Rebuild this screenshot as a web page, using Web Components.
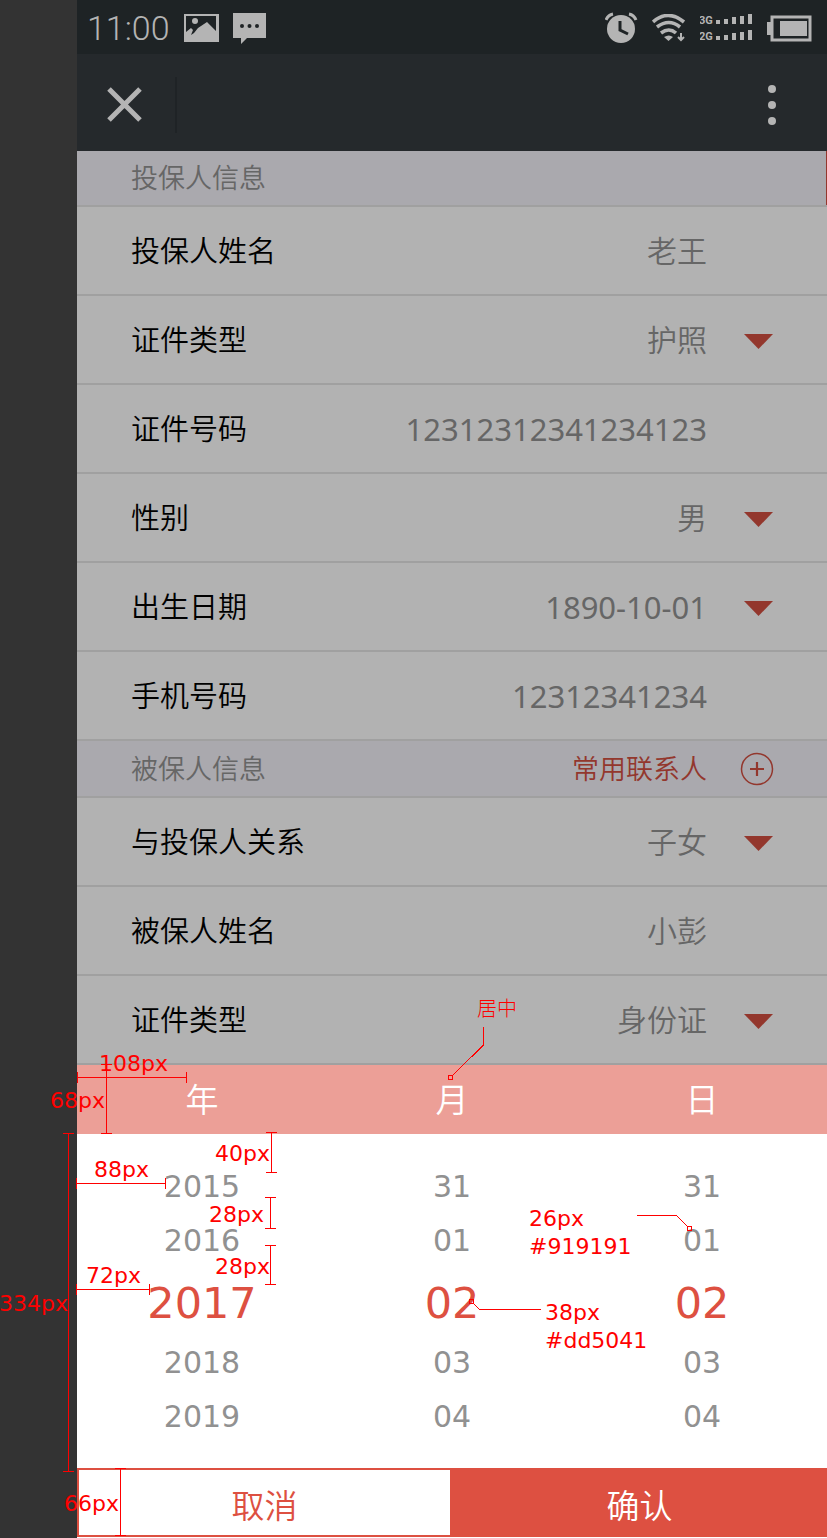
<!DOCTYPE html>
<html lang="zh-CN">
<head>
<meta charset="utf-8">
<meta name="viewport" content="width=device-width, initial-scale=1">
<title>投保人信息</title>
<style>
  html { background: #333; }
  body {
    margin: 0;
    font-family: "Noto Sans", "Noto Sans CJK SC", sans-serif;
    --accent: #dd5041;
    --accent-dim: #93372d;
    --muted: #666;
    --line: #a0a0a0;
    --num: "DejaVu Sans", "Noto Sans CJK SC", sans-serif;
    --cjk-weight: 350;
  }
</style>
</head>
<body>
<insure-app></insure-app>

<script>
const define = (name, html, setup) => {
  const template = document.createElement('template');
  template.innerHTML = html;
  customElements.define(name, class extends HTMLElement {
    connectedCallback() {
      if (this.shadowRoot) return;
      this.attachShadow({ mode: 'open' }).append(template.content.cloneNode(true));
      if (setup) setup(this, this.shadowRoot);
    }
  });
};

define('status-bar', `
<style>
  :host { display: flex; align-items: center; box-sizing: border-box; height: 54px; padding: 2px 15px 0 10px; background: #1e2325; color: #b4b4b4; font: 300 34px/52px Roboto, sans-serif; }
  svg { display: block; flex: none; }
  .left, .right { display: flex; align-items: center; gap: 14px; }
  .right { margin-left: auto; }
</style>
<div class="left">
  <time>11:00</time>
  <svg width="35" height="28" viewBox="0 0 35 28"><path fill="#b4b4b4" fill-rule="evenodd" d="M0 0h35v28H0zM2 2v16l5-4 2 2-2 5 3-2 4-5 9-6 9 9V2z"/><circle cx="11" cy="7" r="3" fill="#b4b4b4"/></svg>
  <svg width="33" height="32" viewBox="0 0 33 32"><path fill="#b4b4b4" d="M0 1h33v25H14l-6 6v-6H0z"/><g fill="#1e2325"><circle cx="9" cy="14" r="2"/><circle cx="16.500" cy="14" r="2"/><circle cx="24" cy="14" r="2"/></g></svg>
</div>
<div class="right">
  <svg width="33" height="32" viewBox="0 0 33 32"><circle cx="16" cy="17" r="14" fill="#b4b4b4"/><path d="M1 8q2-5 7-6M31 8q-2-5-7-6" fill="none" stroke="#b4b4b4" stroke-width="3"/><path d="M15 9v9l8 4" fill="none" stroke="#1e2325" stroke-width="3"/></svg>
  <svg width="34" height="28" viewBox="0 0 34 28"><g fill="none" stroke="#b4b4b4" stroke-width="3.600"><path d="M1 8q15-13 31 0"/><path d="M5 13q12-9 23 0"/><path d="M9 19q8-6 15 0"/></g><path d="M12 23q5-3 9 0l-4.500 4z" fill="#b4b4b4"/><path d="M29 19v7M26 23l3 3 3-3" fill="none" stroke="#b4b4b4" stroke-width="2"/></svg>
  <svg width="53" height="32" viewBox="0 0 53 32" fill="#b4b4b4"><g font-family="Roboto, sans-serif" font-weight="700" font-size="11"><text x="-1" y="12">3G</text><text x="-1" y="28">2G</text></g>
    <path d="M16 8h4v4h-4zM24 7h4v5h-4zM32 5h4v7h-4zM40 4h4v8h-4zM48 2h4v10h-4zM16 24h4v4h-4zM24 23h4v5h-4zM32 21h4v7h-4zM40 20h4v8h-4zM48 18h4v10h-4z"/></svg>
  <svg width="45" height="27" viewBox="0 0 45 27"><rect x="5" y="2" width="38" height="23" fill="none" stroke="#b4b4b4" stroke-width="3"/><path d="M0 7h4v13H0zM13 6h27v15H13z" fill="#b4b4b4"/></svg>
</div>`);

define('title-bar', `
<style>
  :host { display: flex; align-items: center; height: 93px; padding: 4px 50px 0 30px; background: #25292c; }
  button { all: unset; display: block; cursor: pointer; }
  svg { display: block; }
  i { width: 2px; height: 56px; margin-left: 32px; background: #1f2326; }
  .more { margin-left: auto; }
</style>
<button aria-label="关闭"><svg width="36" height="36" viewBox="0 0 36 36"><path d="M2 2l31 31M33 2L2 33" stroke="#b4b4b4" stroke-width="5"/></svg></button>
<i></i>
<button class="more" aria-label="更多"><svg width="10" height="42" viewBox="0 0 10 42" fill="#b4b4b4"><circle cx="5" cy="5" r="4"/><circle cx="5" cy="21" r="4"/><circle cx="5" cy="37" r="4"/></svg></button>`);

define('section-head', `
<style>
  :host { display: grid; grid-template-columns: 1fr auto; align-items: center; height: 55px; padding-left: 54px; background: #aaa9ae; border-bottom: 2px solid var(--line); color: var(--muted); font-size: 27px; font-weight: var(--cjk-weight); }
  :host([edge]) { height: 54px; box-shadow: inset -1px 0 var(--accent-dim); }
  h2 { margin: 0; font: inherit; line-height: 36px; }
</style>
<h2><slot></slot></h2><slot name="action"></slot>`);

define('contact-button', `
<style>
  :host { display: block; color: var(--accent-dim); }
  button { all: unset; display: grid; grid-template-columns: auto 120px; align-items: center; line-height: 36px; cursor: pointer; }
  svg { display: block; margin-left: 33px; }
</style>
<button><slot></slot><svg width="34" height="34" viewBox="0 0 34 34" fill="none" stroke="currentColor"><circle cx="17" cy="17" r="15.500" stroke-width="1.500"/><path d="M10 17h14M17 10v14" stroke-width="2.200"/></svg></button>`);

define('form-row', `
<style>
  :host { display: grid; grid-template-columns: auto 1fr 120px; align-items: center; height: 87px; padding-left: 54px; background: #b2b2b2; border-bottom: 2px solid var(--line); font-size: 29px; font-weight: var(--cjk-weight); color: #000; }
  label { line-height: 40px; }
  input, select { all: unset; box-sizing: border-box; width: 100%; min-width: 0; height: 48px; line-height: 48px; text-align: right; text-align-last: right; color: var(--muted); font-size: 30px; font-weight: var(--cjk-weight); }
  .num { font-size: 31px; font-weight: 400; }
  svg { display: block; margin: 4px 0 0 37px; }
</style>`, (host, root) => {
  const pick = host.hasAttribute('pick');
  const label = document.createElement('label');
  label.htmlFor = 'field';
  label.textContent = host.getAttribute('label');
  const value = host.getAttribute('value');
  const field = document.createElement(pick ? 'select' : 'input');
  field.id = 'field';
  if (pick) field.add(new Option(value)); else field.value = value;
  if (/^[\d-]+$/.test(value)) field.className = 'num';
  root.append(label, field);
  if (pick) root.append(Object.assign(document.createElement('template'), {
    innerHTML: '<svg width="29" height="15" viewBox="0 0 29 15"><path d="M0 0h29L14.500 15z" fill="var(--accent-dim)"/></svg>'
  }).content);
});

define('picker-column', `
<style>
  :host { display: block; text-align: center; }
  h3 { margin: 0; height: 69px; font-size: 33px; font-weight: var(--cjk-weight); line-height: 69px; color: #fff; background: #ec9f97; }
  div { padding: 26px 0 24px; }
  button { all: unset; display: block; width: 100%; height: 54px; line-height: 54px; font-family: var(--num); font-size: 30px; color: #919191; cursor: pointer; }
  button[aria-selected=true] { height: 68px; line-height: 70px; font-size: 43px; color: var(--accent); }
</style>
<h3></h3><div role="listbox"></div>`, (host, root) => {
  const name = host.getAttribute('name');
  root.querySelector('h3').textContent = name;
  const list = root.querySelector('div');
  list.setAttribute('aria-label', name);
  host.getAttribute('options').split(' ').forEach((text, i) => {
    const b = document.createElement('button');
    b.setAttribute('role', 'option');
    b.setAttribute('aria-selected', i === 2);
    b.textContent = text;
    list.append(b);
  });
});

define('action-bar', `
<style>
  :host { display: grid; grid-template-columns: 1fr 1fr; height: 69px; }
  button { margin: 0; padding: 2px 0 0; border: 2px solid var(--accent); border-radius: 0; background: var(--accent); color: #fff; font: inherit; font-size: 33px; font-weight: var(--cjk-weight); cursor: pointer; }
  .cancel { background: #fff; color: var(--accent); }
</style>
<button class="cancel">取消</button><button>确认</button>`);

/* Redline layer: origin is the sheet's top edge at the left side of the page. */
define('spec-layer', `
<style>
  :host { position: absolute; left: -77px; top: 0; width: 0; height: 0; pointer-events: none; color: #f00; font: 22px/28px var(--num); }
  svg { position: absolute; left: 0; top: 0; overflow: visible; }
  span { position: absolute; white-space: pre; }
  .cjk { font-size: 20px; font-weight: 300; font-family: "Noto Sans CJK SC", sans-serif; }
</style>
<svg width="1" height="1" fill="none" stroke="#f00" shape-rendering="crispEdges">
  <path d="M77 12.500H187M77.500 7v11M186.500 7v11"/>
  <path d="M106.500 -1V69M101 -.5h11M101 68.500h11"/>
  <path d="M271.500 67V108M266 67.500h11M266 107.500h11"/>
  <path d="M76 118.500H166M76.500 113v11M165.500 113v11"/>
  <path d="M270.500 132V164M265 132.500h11M265 163.500h11"/>
  <path d="M270.500 180V220M265 180.500h11M265 219.500h11"/>
  <path d="M76 224.500H150M76.500 219v11M149.500 219v11"/>
  <path d="M68.500 68V407M63 68.500h11M63 406.500h11"/>
  <path d="M120.500 403V471M115 403.500h11M115 470.500h11"/>
  <path d="M483.500 -38V-20L452 11M448.500 10.500h4v4h-4z"/>
  <path d="M637 150.500H676.500L688 162M687.500 161.500h4v4h-4z"/>
  <path d="M541 244.500H479.500L473 238M469.500 234.500h4v4h-4z"/>
</svg>`, (host, root) => {
  [['108px', 99, -15], ['68px', 50, 22], ['40px', 215, 75], ['88px', 94, 91], ['28px', 209, 136],
   ['28px', 215, 188], ['72px', 86, 197], ['334px', -1, 225], ['66px', 64, 425],
   ['26px\n#919191', 529, 140], ['38px\n#dd5041', 545, 234], ['居中', 477, -71]
  ].forEach(([text, x, y]) => {
    const s = document.createElement('span');
    s.textContent = text;
    if (text === '居中') s.className = 'cjk';
    s.style.left = x + 'px';
    s.style.top = y + 'px';
    root.append(s);
  });
});

define('date-sheet', `
<style>
  :host { display: block; position: relative; background: #fff; }
  .columns { display: grid; grid-template-columns: repeat(3, 1fr); }
</style>
<div class="columns">
  <picker-column name="年" options="2015 2016 2017 2018 2019"></picker-column>
  <picker-column name="月" options="31 01 02 03 04"></picker-column>
  <picker-column name="日" options="31 01 02 03 04"></picker-column>
</div>
<action-bar></action-bar>
<spec-layer></spec-layer>`);

define('insure-app', `
<style>
  :host { display: block; box-sizing: border-box; min-height: 100vh; margin-left: 77px; background: #fff; }
</style>
<status-bar></status-bar>
<title-bar></title-bar>
<section-head edge>投保人信息</section-head>
<form-row label="投保人姓名" value="老王"></form-row>
<form-row label="证件类型" value="护照" pick></form-row>
<form-row label="证件号码" value="12312312341234123"></form-row>
<form-row label="性别" value="男" pick></form-row>
<form-row label="出生日期" value="1890-10-01" pick></form-row>
<form-row label="手机号码" value="12312341234"></form-row>
<section-head>被保人信息<contact-button slot="action">常用联系人</contact-button></section-head>
<form-row label="与投保人关系" value="子女" pick></form-row>
<form-row label="被保人姓名" value="小彭"></form-row>
<form-row label="证件类型" value="身份证" pick></form-row>
<date-sheet></date-sheet>`);
</script>
</body>
</html>
